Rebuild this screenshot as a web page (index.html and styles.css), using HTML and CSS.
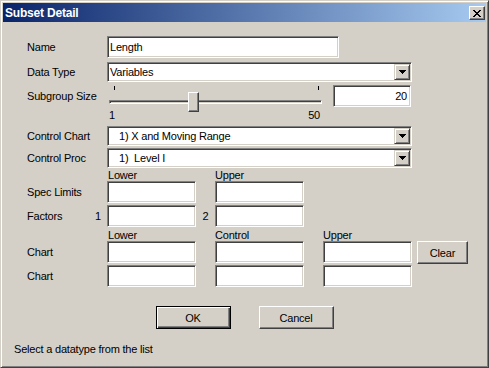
FILE: index.html
```html
<!DOCTYPE html>
<html lang="en">
<head>
  <meta charset="UTF-8" />
  <title>Subset Detail</title>
  <link rel="stylesheet" href="styles.css">
</head>
<body>
  <div class="window">
    <div class="titlebar">
      <span class="title">Subset Detail</span>
      <button class="close" title="Close">
        <svg width="8" height="7" viewBox="0 0 8 7" shape-rendering="crispEdges"><path d="M0 0h2v1h-2z M6 0h2v1h-2z M1 1h2v1h-2z M5 1h2v1h-2z M2 2h4v1h-4z M3 3h2v1h-2z M2 4h4v1h-4z M1 5h2v1h-2z M5 5h2v1h-2z M0 6h2v1h-2z M6 6h2v1h-2z" fill="#000"/></svg>
      </button>
    </div>

    <div class="form">
      <div class="row">
        <span class="label">Name</span>
        <input class="sunken name" type="text" value="Length" />
      </div>

      <div class="row combo-row first-combo">
        <span class="label">Data Type</span>
        <div class="sunken combo">
          <span class="combo-text">Variables</span>
          <span class="drop"><svg width="7" height="4" viewBox="0 0 7 4" shape-rendering="crispEdges"><path d="M0 0h7v1h-7z M1 1h5v1h-5z M2 2h3v1h-3z M3 3h1v1h-1z" fill="#000"/></svg></span>
        </div>
      </div>

      <div class="row slider-row">
        <span class="label">Subgroup Size</span>
        <div class="slider">
          <span class="tick tick-min"></span>
          <span class="tick tick-max"></span>
          <span class="track"></span>
          <span class="thumb" style="left: 81px"></span>
        </div>
        <input class="sunken value" type="text" value="20" />
      </div>
      <div class="scale">
        <span>1</span>
        <span>50</span>
      </div>

      <div class="row combo-row chart-combo">
        <span class="label">Control Chart</span>
        <div class="sunken combo">
          <span class="combo-text indent">1) X and Moving Range</span>
          <span class="drop"><svg width="7" height="4" viewBox="0 0 7 4" shape-rendering="crispEdges"><path d="M0 0h7v1h-7z M1 1h5v1h-5z M2 2h3v1h-3z M3 3h1v1h-1z" fill="#000"/></svg></span>
        </div>
      </div>

      <div class="row combo-row proc-combo">
        <span class="label">Control Proc</span>
        <div class="sunken combo">
          <span class="combo-text indent">1)&nbsp; Level I</span>
          <span class="drop"><svg width="7" height="4" viewBox="0 0 7 4" shape-rendering="crispEdges"><path d="M0 0h7v1h-7z M1 1h5v1h-5z M2 2h3v1h-3z M3 3h1v1h-1z" fill="#000"/></svg></span>
        </div>
      </div>

      <div class="heads heads-spec">
        <span class="head">Lower</span>
        <span class="head">Upper</span>
      </div>
      <div class="row">
        <span class="label">Spec Limits</span>
        <input class="sunken field" type="text" />
        <input class="sunken field next" type="text" />
      </div>
      <div class="row pair">
        <span class="label split"><span>Factors</span><span>1</span></span>
        <input class="sunken field" type="text" />
        <span class="num">2</span>
        <input class="sunken field" type="text" />
      </div>

      <div class="heads heads-chart">
        <span class="head">Lower</span>
        <span class="head">Control</span>
        <span class="head">Upper</span>
      </div>
      <div class="row">
        <span class="label">Chart</span>
        <input class="sunken field" type="text" />
        <input class="sunken field next" type="text" />
        <input class="sunken field next" type="text" />
        <button class="btn clear">Clear</button>
      </div>
      <div class="row pair">
        <span class="label">Chart</span>
        <input class="sunken field" type="text" />
        <input class="sunken field next" type="text" />
        <input class="sunken field next" type="text" />
      </div>
    </div>

    <div class="actions">
      <button class="btn default">OK</button>
      <button class="btn">Cancel</button>
    </div>

    <div class="status">Select a datatype from the list</div>
  </div>
</body>
</html>
```

FILE: styles.css
```css
body {
  margin: 0;
  background: #d4d0c8;
  font-family: "Liberation Sans", Arial, sans-serif;
  font-size: 11px;
  letter-spacing: -0.2px;
  color: #000;
}
.window {
  width: 489px;
  height: 368px;
  box-sizing: border-box;
  border: 1px solid;
  border-color: #d4d0c8 #404040 #404040 #d4d0c8;
  box-shadow: inset 1px 1px #fff, inset -1px -1px #808080;
  padding: 2px;
  display: flex;
  flex-direction: column;
}
.titlebar {
  height: 19px;
  display: flex;
  align-items: center;
  justify-content: space-between;
  padding: 0 1px 0 2px;
  background: linear-gradient(to right, #0a246a, #a6caf0);
  color: #fff;
}
.title {
  font-weight: bold;
  font-size: 12px;
  letter-spacing: -0.2px;
}
.close {
  width: 16px;
  height: 14px;
  box-sizing: border-box;
  padding: 0;
  margin-top: 1px;
  background: #d4d0c8;
  border: 1px solid;
  border-color: #fff #404040 #404040 #fff;
  box-shadow: inset -1px -1px #808080;
  display: flex;
  align-items: center;
  justify-content: center;
}
.form {
  padding: 14px 0 0 24px;
}
.row {
  display: flex;
  align-items: center;
  height: 22px;
}
.label {
  width: 80px;
  flex: none;
}
.split {
  display: flex;
  justify-content: space-between;
  padding-right: 6px;
  box-sizing: border-box;
}
.sunken {
  box-sizing: border-box;
  border: 1px solid;
  border-color: #808080 #fff #fff #808080;
  box-shadow: inset 1px 1px #404040, inset -1px -1px #d4d0c8;
  background: #fff;
}
input {
  font: inherit;
  letter-spacing: inherit;
  color: #000;
  padding: 0 0 0 2px;
  margin: 0;
  outline: none;
}
.name {
  width: 232px;
  height: 22px;
}
.combo-row {
  height: 20px;
}
.first-combo {
  margin-top: 4px;
}
.chart-combo {
  margin-top: 4px;
}
.proc-combo {
  margin-top: 2px;
}
.combo {
  width: 305px;
  height: 20px;
  display: flex;
  align-items: center;
}
.combo-text {
  flex: 1;
  padding-left: 2px;
}
.combo-text.indent {
  padding-left: 11px;
}
.drop {
  width: 16px;
  height: 16px;
  margin-right: 1px;
  box-sizing: border-box;
  background: #d4d0c8;
  border: 1px solid;
  border-color: #d4d0c8 #404040 #404040 #d4d0c8;
  box-shadow: inset 1px 1px #fff, inset -1px -1px #808080;
  display: flex;
  align-items: center;
  justify-content: center;
}
.slider-row {
  margin-top: 3px;
}
.slider {
  position: relative;
  width: 218px;
  height: 22px;
  flex: none;
}
.tick {
  position: absolute;
  top: 1px;
  width: 1px;
  height: 4px;
  background: #000;
}
.tick-min {
  left: 7px;
}
.tick-max {
  left: 211px;
}
.track {
  position: absolute;
  top: 15px;
  left: 2px;
  width: 213px;
  height: 4px;
  box-sizing: border-box;
  border: 1px solid;
  border-color: #808080 #fff #fff #808080;
  box-shadow: inset 1px 1px #404040, inset -1px -1px #d4d0c8;
}
.thumb {
  position: absolute;
  top: 7px;
  width: 11px;
  height: 20px;
  box-sizing: border-box;
  background: #d4d0c8;
  border: 1px solid;
  border-color: #fff #404040 #404040 #fff;
  box-shadow: inset -1px -1px #808080;
}
.value {
  width: 78px;
  height: 22px;
  margin-left: 8px;
  text-align: right;
  padding: 0 3px 0 0;
}
.scale {
  margin: 2px 0 0 80px;
  width: 218px;
  height: 13px;
  line-height: 13px;
  box-sizing: border-box;
  padding: 0 5px 0 2px;
  display: flex;
  justify-content: space-between;
}
.heads {
  display: flex;
  height: 12px;
  line-height: 12px;
  padding-left: 80px;
}
.heads-spec {
  margin-top: 1px;
}
.heads-chart {
  margin-top: 2px;
}
.head {
  width: 89px;
  margin-right: 19px;
}
.head:first-child {
  padding-left: 1px;
  width: 88px;
}
.pair {
  margin-top: 2px;
}
.field {
  width: 89px;
  height: 22px;
}
.field.next {
  margin-left: 19px;
}
.num {
  width: 19px;
  text-align: center;
}
.btn {
  font: inherit;
  letter-spacing: inherit;
  color: #000;
  width: 75px;
  height: 23px;
  padding: 0;
  background: #d4d0c8;
  border: 1px solid;
  border-color: #fff #404040 #404040 #fff;
  box-shadow: inset -1px -1px #808080;
}
.btn.default {
  border-color: #000;
  box-shadow: inset 1px 1px #fff, inset -1px -1px #404040, inset -2px -2px #808080;
}
.clear {
  width: 51px;
  margin-left: 5px;
  align-self: flex-start;
}
.actions {
  margin-top: 19px;
  display: flex;
  justify-content: center;
  gap: 28px;
}
.status {
  margin-top: 14px;
  padding-left: 11px;
  line-height: 13px;
}
```
